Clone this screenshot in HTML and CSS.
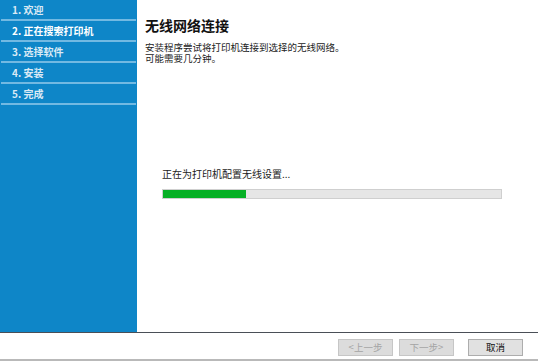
FILE: index.html
```html
<!DOCTYPE html>
<html>
<head>
<meta charset="utf-8">
<link rel="stylesheet" href="styles.css">
</head>
<body>
<div class="app">
  <div class="main">
    <nav class="side">
      <div class="step">1. 欢迎</div>
      <div class="step current">2. 正在搜索打印机</div>
      <div class="step">3. 选择软件</div>
      <div class="step">4. 安装</div>
      <div class="step">5. 完成</div>
    </nav>
    <section class="content">
      <h1 class="title">无线网络连接</h1>
      <p class="desc">安装程序尝试将打印机连接到选择的无线网络。<br>可能需要几分钟。</p>
      <div class="status">
        <div class="status-text">正在为打印机配置无线设置...</div>
        <div class="bar"><div class="fill" style="width:24.5%"></div></div>
      </div>
    </section>
  </div>
  <footer class="footer">
    <button class="btn" disabled>&lt;上一步</button>
    <button class="btn" disabled>下一步&gt;</button>
    <button class="btn cancel">取消</button>
  </footer>
</div>
</body>
</html>
```
FILE: styles.css
```css
html, body {
  margin: 0;
  padding: 0;
  background: #fff;
}
body {
  font-family: "Noto Sans CJK SC", "Noto Sans", sans-serif;
  width: 538px;
  height: 361px;
  overflow: hidden;
}
.app {
  display: flex;
  flex-direction: column;
  height: 361px;
}
.main {
  display: flex;
  height: 332px;
  border-bottom: 1px solid #4a4f57;
}
.side {
  width: 137px;
  background: #0e86c8;
  display: flex;
  flex-direction: column;
}
.step {
  height: 19px;
  line-height: 19px;
  border-bottom: 2px solid #72b9e2;
  margin: 0 1px;
  padding-left: 11px;
  color: #dbeaf5;
  font-size: 10px;
  font-weight: bold;
}
.step.current {
  color: #ffffff;
}
.content {
  flex: 1;
  padding: 15px 0 0 8px;
  display: flex;
  flex-direction: column;
}
.title {
  margin: 0;
  font-size: 14px;
  font-weight: bold;
  line-height: 20px;
  color: #111;
}
.desc {
  margin: 7px 0 0 0;
  font-size: 9.5px;
  line-height: 11px;
  color: #222;
}
.status {
  margin: 103px 0 0 17px;
  width: 340px;
}
.status-text {
  font-size: 10px;
  line-height: 14px;
  color: #222;
}
.bar {
  margin-top: 8px;
  height: 8px;
  background: #e6e6e6;
  border: 1px solid #cfcfcf;
}
.fill {
  height: 100%;
  background: #06b025;
}
.footer {
  flex: 1;
  display: flex;
  align-items: center;
  justify-content: flex-end;
  gap: 6px;
  padding-right: 15px;
  border-bottom: 2px solid #b9b9b9;
  box-sizing: border-box;
}
.btn {
  width: 55px;
  height: 17px;
  padding: 0;
  font-family: "Noto Sans CJK SC", sans-serif;
  font-size: 9.5px;
  line-height: 15px;
  border: 1px solid #c6c6c6;
  background: #dcdcdc;
  color: #a4a4a4;
  margin-top: 2px;
}
.btn.cancel {
  margin-left: 8px;
  background: #e1e1e1;
  border-color: #adadad;
  color: #111;
}
```
